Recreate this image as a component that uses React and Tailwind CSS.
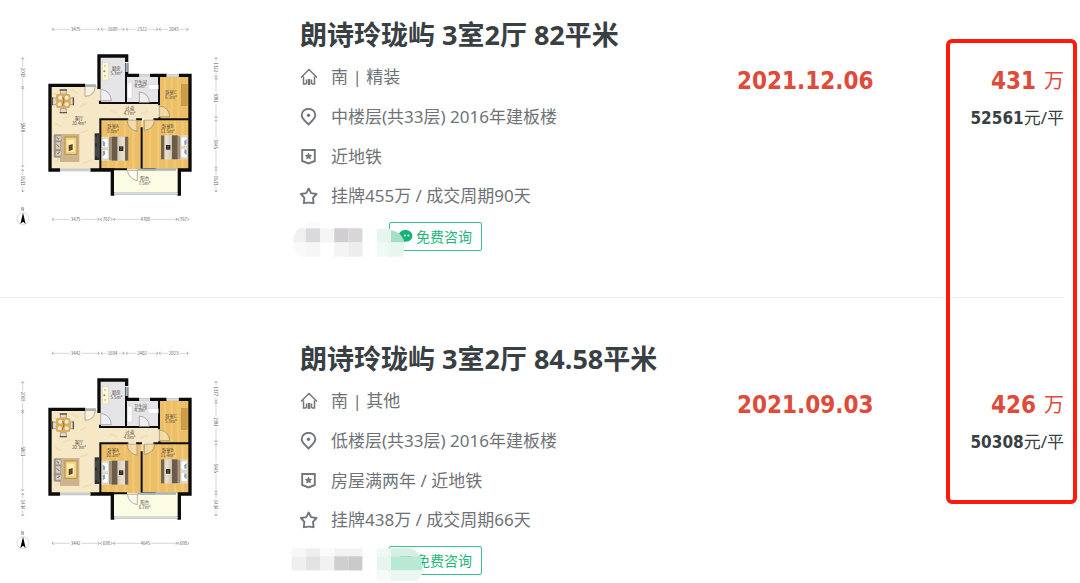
import React from "react";

const houses = [
  {
    id: 1,
    title: "朗诗玲珑屿 3室2厅 82平米",
    orientation: "南 | 精装",
    floor: "中楼层(共33层) 2016年建板楼",
    tags: "近地铁",
    deal: "挂牌455万 / 成交周期90天",
    date: "2021.12.06",
    total: "431",
    unit: "52561",
    plan: {
      top: ["3475", "1689", "2322", "2043"],
      bottom: ["3475", "767", "4708", "767"],
      left: ["2039", "5848", "1533"],
      right: ["1322", "3081", "3445", "1533"],
      areas: { living: "20.4", kitchen: "5.3", bath: "4.5", c: "6.1", hall: "4.7", a: "9.8", b: "11.5", balcony: "7.5" },
    },
  },
  {
    id: 2,
    title: "朗诗玲珑屿 3室2厅 84.58平米",
    orientation: "南 | 其他",
    floor: "低楼层(共33层) 2016年建板楼",
    tags: "房屋满两年 / 近地铁",
    deal: "挂牌438万 / 成交周期66天",
    date: "2021.09.03",
    total: "426",
    unit: "50308",
    plan: {
      top: ["3442", "1694", "2402", "2023"],
      bottom: ["3442", "698", "4645", "698"],
      left: ["2069", "5863", "1434"],
      right: ["1377", "2981", "3445", "1434"],
      areas: { living: "20.3", kitchen: "5.5", bath: "4.3", c: "5.9", hall: "4.8", a: "10.1", b: "11.4", balcony: "6.7" },
    },
  },
];

const Dim = ({ x, y, len, text, vertical }) => (
  <g transform={`translate(${x} ${y})${vertical ? " rotate(90)" : ""}`} stroke="#c2c2c2" strokeWidth="2">
    <path d={`M${-len / 2} 0H-17M17 0H${len / 2}`} />
    <path d={`M${-len / 2 + 5} -4l-5 4 5 4M${len / 2 - 5} -4l5 4-5 4`} fill="none" stroke="#8a8a8a" />
    <text y="5" textAnchor="middle" fontSize="13" fill="#5a5a5a" stroke="none">{text}</text>
  </g>
);

const Label = ({ x, y, name, area }) => (
  <g textAnchor="middle" fontSize="13" fill="#4a443a">
    <text x={x} y={y}>{name}</text>
    <text x={x} y={y + 14}>{area}m²</text>
  </g>
);

const Bed = ({ flip }) => (
  <g transform={flip ? "translate(563 376) scale(-1 1)" : "translate(305 380)"}>
    <rect width="80" height="72" fill="#e6dccb" />
    <rect x="1" y="5" width="19" height="28" rx="5" fill="#fff" stroke="#aaa49c" />
    <rect x="1" y="39" width="19" height="28" rx="5" fill="#fff" stroke="#aaa49c" />
    <path d="M3 11l8 7-2 12-6-3zM3 60l8-7-2-12-6 3z" fill="#86a6c6" />
    <rect x="22" y="1" width="8" height="70" fill="#a4937c" />
    <rect x="30" width="18" height="72" fill="#6d5b4a" />
    <rect x="48" width="9" height="72" fill="#d9cfbf" />
    <rect x="70" width="10" height="72" fill="#75644f" />
    <rect x="52" y="29" width="13" height="14" fill="#28221d" />
    <path d="M55 33h7M55 38h7" stroke="#d5c9b8" />
  </g>
);

const FloorPlan = ({ plan }) => (
  <svg viewBox="0 0 720 690" className="h-[230px] w-[240px] shrink-0 font-['Noto_Sans_CJK_SC',sans-serif]" role="img" aria-label="户型图">
    <Dim x={227} y={58} len={142} text={plan.top[0]} />
    <Dim x={338} y={58} len={70} text={plan.top[1]} />
    <Dim x={426} y={58} len={96} text={plan.top[2]} />
    <Dim x={521} y={58} len={88} text={plan.top[3]} />
    <Dim x={227} y={628} len={142} text={plan.bottom[0]} />
    <Dim x={319} y={628} len={36} text={plan.bottom[1]} />
    <Dim x={436} y={628} len={192} text={plan.bottom[2]} />
    <Dim x={550} y={628} len={34} text={plan.bottom[3]} />
    <Dim x={68} y={188} len={90} text={plan.left[0]} vertical />
    <Dim x={68} y={352} len={238} text={plan.left[1]} vertical />
    <Dim x={68} y={512} len={68} text={plan.left[2]} vertical />
    <Dim x={648} y={172} len={60} text={plan.right[0]} vertical />
    <Dim x={648} y={264} len={120} text={plan.right[1]} vertical />
    <Dim x={648} y={402} len={146} text={plan.right[2]} vertical />
    <Dim x={648} y={512} len={68} text={plan.right[3]} vertical />

    <path d="M150 228h150v50h178v50H300v152H150z" fill="#f6e8c6" />
    <path d="M160 250l20 10M215 240l20 10M240 290l20-12M165 340l20 10M240 370l25-10M165 455l16-8M250 460l25-10M190 325l20-8M330 300l20 8M420 312l24-8" stroke="#f0dfb6" strokeWidth="6" fill="none" />
    <path d="M302 140h76v138h-76zM380 200h96v78h-96z" fill="#e5e5e8" />
    <path d="M478 200h90v128h-90zM303 330h122v148H303zM428 330h140v148H428z" fill="#ecbe67" />
    <path d="M495 202v125M515 202v125M535 202v125M325 332v145M350 332v145M375 332v145M400 332v145M450 332v145M475 332v145M500 332v145M525 332v145M548 332v145" stroke="#f1c873" strokeWidth="7" />
    <path d="M336 480h201v70H336z" fill="#fcfbe4" />

    <g fill="none" stroke="#0c0c0c" strokeLinejoin="miter">
      <path d="M256 226H150v254h30M271 480h66v72h6M532 552h6v-72h32V196h-34M500 196h-50M418 196h-38v-37M380 156v-18h-83v99" strokeWidth="10" />
      <path d="M300 272v7h178M378 200v78M477 200v86M478 322v6h90M301 478V328h84M301 328v150h80M425 352v126h42M460 328h108M408 328h18" strokeWidth="6" />
    </g>
    <g stroke="#aab4b8" strokeWidth="7">
      <path d="M256 226h32M418 196h32M500 196h36M180 480h91M380 159v27M343 551h190M412 479h116" />
    </g>
    <path d="M180 480h91M343 551h190M418 196h32M500 196h36" stroke="#fff" strokeWidth="2" />
    <g fill="#fff" fillOpacity=".4" stroke="#8f8b84" strokeWidth="2">
      <path d="M255 229v30q28 0 31-30zM302 272v-34q30 4 32 34zM418 278v-32q29 3 30 32zM478 320v-32q29 3 31 32zM411 330v34q-27-5-30-34zM433 330v31q28-3 31-31zM412 481v31q-26-5-30-31z" />
    </g>

    <rect x="307" y="158" width="19" height="52" fill="#fff8d9" stroke="#cbb98a" />
    <circle cx="315" cy="168" r="2" fill="#a38436" />
    <circle cx="313" cy="184" r="3" fill="#a38436" />
    <circle cx="315" cy="198" r="2" fill="#a38436" />
    <rect x="382" y="217" width="14" height="48" rx="4" fill="#fff" stroke="#b4b4b8" />
    <path d="M444 224h31v14h-24q-7-2-7-14z" fill="#fff" stroke="#c1c1c5" />
    <rect x="544" y="223" width="18" height="64" fill="#cf9d48" stroke="#ad8140" />

    <g fill="#e5dccb" stroke="#8b8175" strokeWidth="2">
      <path d="M181 240h18v12h-18zM181 296h18v12h-18zM158 264h11v20h-11zM210 264h11v20h-11z" />
      <path d="M179 240h22M179 308h22M157 262v24M220 262v24" stroke="#5f574d" strokeWidth="4" />
    </g>
    <rect x="168" y="252" width="43" height="42" rx="6" fill="#dcae5c" />
    <g fill="#f7ecd4">
      <circle cx="181" cy="263" r="6" />
      <circle cx="200" cy="263" r="6" />
      <circle cx="179" cy="283" r="6" />
      <circle cx="200" cy="283" r="6" />
    </g>
    <path d="M188 261l4 11-5 15" stroke="#8e7040" strokeWidth="3" fill="none" />

    <rect x="180" y="372" width="58" height="84" fill="#cdb48d" />
    <rect x="195" y="381" width="36" height="52" fill="#f3d27e" stroke="#b18f4a" strokeWidth="3" />
    <rect x="202" y="389" width="21" height="37" fill="#fdecb4" />
    <path d="M206 406l12-4v17l-12 5z" fill="#57462b" />
    <rect x="161" y="373" width="22" height="70" rx="4" fill="#a1968b" />
    <path d="M167 377h17v15h-17zM167 396h15v22h-15zM167 423h17v15h-17z" fill="#d5cdc4" stroke="#8c8177" />
    <path d="M170 382l7 6M170 403l8 8M172 431l7-4" stroke="#655b51" strokeWidth="3" />
    <rect x="284" y="370" width="15" height="80" fill="#2b2e2e" />
    <path d="M288 380v20M288 410v28M294 375v68" stroke="#777d7c" strokeWidth="2" />

    <Bed />
    <Bed flip />

    <Label x={237} y={331} name="客厅" area={plan.areas.living} />
    <Label x={349} y={180} name="厨房" area={plan.areas.kitchen} />
    <Label x={421} y={221} name="卫生间" area={plan.areas.bath} />
    <Label x={513} y={252} name="卧室C" area={plan.areas.c} />
    <Label x={389} y={301} name="过道" area={plan.areas.hall} />
    <Label x={339} y={354} name="卧室A" area={plan.areas.a} />
    <Label x={503} y={354} name="卧室B" area={plan.areas.b} />
    <Label x={434} y={511} name="阳台" area={plan.areas.balcony} />

    <circle cx="69" cy="626" r="18" fill="none" stroke="#c9c9c9" strokeWidth="2" />
    <path d="M69 608l8 34-8-7-8 7z" fill="#050505" />
    <text x="68" y="602" textAnchor="middle" fontSize="13" fill="#333">N</text>
  </svg>
);

const iconPaths = {
  house: (
    <>
      <path d="M1 9.500L9 1.500l8 8M3.500 8.500V16h2.800M14.500 8.500V16h-2.800M6.500 16v-4.500M11.500 16v-4.500" strokeWidth="1.500" />
      <path d="M9 11v6" strokeWidth="2.500" />
    </>
  ),
  pin: (
    <>
      <path d="M8.500 16.500C5 13 1.700 10.300 1.700 7.200a6.800 6.400 0 0 1 13.600 0c0 3.100-3.300 5.800-6.800 9.300z" />
      <circle cx="8.500" cy="7.300" r="1.700" fill="currentColor" stroke="none" />
    </>
  ),
  badge: (
    <>
      <path d="M2.200 2h12.600v11L8.500 15.500 2.200 13z" />
      <path d="M8.500 4.500l1.200 2.300 2.500.3-1.800 1.800.5 2.500-2.400-1.200-2.400 1.200.5-2.500-1.800-1.800 2.500-.3z" fill="currentColor" stroke="none" />
    </>
  ),
  star: <path d="M8.700 1.500l2.400 4.600 5.400.9-3.500 3.900.6 5.300c-3.300-.8-6.500-.8-9.800 0l.6-5.300L.9 7l5.400-.9z" strokeLinejoin="round" />,
};

const InfoRow = ({ icon, children, className = "h-10" }) => (
  <li className={`flex items-center gap-[13px] ${className}`}>
    <svg viewBox="0 0 18 18" className="size-[18px] shrink-0 text-[#73777b]" fill="none" stroke="currentColor" strokeWidth="1.9">
      {iconPaths[icon]}
    </svg>
    <span>{children}</span>
  </li>
);

// Pixelated cover over the agent's avatar and name
const Mosaic = ({ variant }) =>
  variant === 1 ? (
    <svg viewBox="33 38 396 106" className="pointer-events-none absolute top-0 -left-[9px] h-[35px] w-[132px]">
      <path d="M76 38h44v19H76z" fill="#fbfbfb" />
      <path d="M76 57H56q-18 14-18 43h38z" fill="#f0f0f0" />
      <path d="M38 100h38v43H64q-24-8-26-43z" fill="#f9f9f9" />
      <path d="M76 57h44v43H76z" fill="#dadadc" />
      <path d="M76 100h44v43H76z" fill="#f6f6f6" />
      <path d="M120 57h42v43h-42z" fill="#f5f5f5" />
      <path d="M162 57h43v43h-43z" fill="#d0ced0" />
      <path d="M205 57h43v43h-43z" fill="#d8d6d8" />
      <path d="M162 100h43v43h-43z" fill="#f4f4f4" />
      <path d="M205 100h43v43h-43z" fill="#ededed" />
      <path d="M248 57h43v43h-43z" fill="#fcfffd" />
      <path d="M291 100h43v43h-43z" fill="#f0faf6" />
      <path d="M326 62q40 2 49 38h-49z" fill="#a5dfc8" />
      <path d="M291 59h43v41h-43z" fill="#e6f6ef" />
      <path d="M326 100h49q1 28-7 43h-42z" fill="#e8f6f0" />
    </svg>
  ) : (
    <svg viewBox="33 38 396 106" className="pointer-events-none absolute top-0 -left-[9px] h-[35px] w-[132px]">
      <path d="M33 45h43v24H33z" fill="#f7f7f7" />
      <path d="M76 45h44v24H76z" fill="#eeeeee" />
      <path d="M120 45h42v24h-42z" fill="#fafafa" />
      <path d="M162 45h86v24h-86z" fill="#f2f2f2" />
      <path d="M33 69h43v43H33z" fill="#efefef" />
      <path d="M76 69h44v43H76z" fill="#e3e3e3" />
      <path d="M120 69h42v43h-42z" fill="#f1f1f1" />
      <path d="M162 69h43v43h-43z" fill="#cfcfcf" />
      <path d="M205 69h43v43h-43z" fill="#cacaca" />
      <path d="M248 45h43v67h-43z" fill="#fcfffd" />
      <path d="M291 45h43v24h-43z" fill="#effaf5" />
      <path d="M291 69h43v43h-43z" fill="#e6f6ef" />
      <path d="M291 112h43v31h-43z" fill="#f5fcf8" />
      <path d="M334 45h59q22 7 30 24h-89z" fill="#d5efe4" />
      <path d="M334 69h89q6 16 6 43h-95z" fill="#b9e8d5" />
      <path d="M334 112h95q-4 20-15 31h-80z" fill="#ebf7f2" />
    </svg>
  );

const HouseItem = ({ house }) => (
  <li className="flex border-[#efefef] pt-[17px] pb-[46px] not-first:border-t not-first:pt-[43px] last:pb-0">
    <div className="-mt-[7px] w-[300px] shrink-0">
      <FloorPlan plan={house.plan} />
    </div>
    <div className="min-w-0 flex-1">
      <h2 className="h-9 text-[27px] leading-9 font-bold whitespace-nowrap text-[#394043]">
        <a href="#detail">{house.title}</a>
      </h2>
      <ul className="mt-1 text-[17px] whitespace-nowrap text-[#6f7377]">
        <InfoRow icon="house">{house.orientation}</InfoRow>
        <InfoRow icon="pin">{house.floor}</InfoRow>
        <InfoRow icon="badge">{house.tags}</InfoRow>
        <InfoRow icon="star" className="h-[37px]">{house.deal}</InfoRow>
      </ul>
      <div className="relative mt-2 flex h-[29px] pl-[89px]">
        <button type="button" className="flex h-[29px] w-[93px] items-center gap-[3px] rounded-xs border border-[#3cc28d] pl-2 text-[14px] whitespace-nowrap text-[#1db77a]">
          <svg viewBox="0 0 16 16" className="size-[15px] shrink-0">
            <path d="M8 1c4.300 0 7.300 2.600 7.300 6.300s-3 6.300-7.300 6.300c-1 0-2-.1-2.700-.4L2.500 14l.4-2.500C1.500 10.400.7 9 .7 7.300.7 3.600 3.700 1 8 1z" fill="#10b574" />
            <circle cx="7.500" cy="7" r="1.100" fill="#fff" />
            <circle cx="11" cy="7" r="1.100" fill="#fff" />
          </svg>
          免费咨询
        </button>
        <Mosaic variant={house.id} />
      </div>
    </div>
    <p className="mt-11 w-[208px] shrink-0 font-['DejaVu_Sans_Condensed','DejaVu_Sans',sans-serif] text-2xl leading-10 font-bold text-[#de4b3b]">
      {house.date}
    </p>
    <div className="mt-11 w-[119px] shrink-0 text-right whitespace-nowrap">
      <p className="flex items-center justify-end gap-2 text-xl leading-10 text-[#de4b3b]">
        <span className="font-['DejaVu_Sans_Condensed','DejaVu_Sans',sans-serif] text-2xl leading-10 font-bold">{house.total}</span>
        <span>万</span>
      </p>
      <p className="text-[17px] leading-[34px] text-[#394043]">
        <span className="font-['DejaVu_Sans_Condensed','DejaVu_Sans',sans-serif] font-bold">{house.unit}</span>元/平
      </p>
    </div>
  </li>
);

const App = () => {
  return (
    <main className="relative overflow-hidden bg-white pr-4 pb-2 font-['Noto_Sans','Noto_Sans_CJK_SC',sans-serif]">
      <ul>
        {houses.map((house) => (
          <HouseItem key={house.id} house={house} />
        ))}
      </ul>
      <div className="pointer-events-none absolute top-[39px] right-[3px] h-[465px] w-[131px] rounded-md border-4 border-[#ff1a0c]" />
    </main>
  );
};

export default App;
